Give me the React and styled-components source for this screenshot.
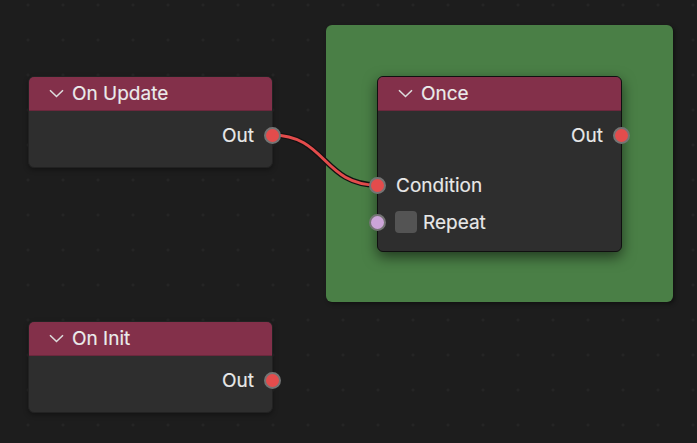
import React from "react";
import styled, { createGlobalStyle } from "styled-components";

const Global = createGlobalStyle`
  html, body { margin: 0; padding: 0; background: #1d1d1d; }
  body { font-family: Inter, "Noto Sans", sans-serif; }
`;

const Canvas = styled.div`
  position: relative;
  width: 697px;
  height: 443px;
  overflow: hidden;
  background-color: #1d1d1d;
  background-image: radial-gradient(circle, #272727 0px, #272727 1px, transparent 1.5px);
  background-size: 35px 35px;
  background-position: 10.5px -12.5px;
`;

const Frame = styled.div`
  position: absolute;
  left: 326px;
  top: 25px;
  width: 347px;
  height: 277px;
  border-radius: 6px;
  background: #4a7f46;
  box-shadow: 1px 1px 0 #141414, 2px 2px 4px rgba(0, 0, 0, 0.4);
`;

const Node = styled.div`
  position: absolute;
  left: ${(p) => p.$x}px;
  top: ${(p) => p.$y}px;
  width: 245px;
  border-radius: 6px;
  background: #2e2e2e;
  box-sizing: border-box;
  border: 1px solid ${(p) => (p.$outlined ? "#101010" : "#222")};
  box-shadow: ${(p) =>
    p.$outlined ? "0 5px 14px rgba(0,0,0,0.55)" : "0 2px 5px rgba(0,0,0,0.35)"};
`;

const Header = styled.div`
  display: flex;
  align-items: center;
  gap: 8px;
  height: 33px;
  padding-left: 20px;
  background: #83304a;
  border-radius: 5px 5px 0 0;
  border-bottom: 1px solid #6c283d;
  color: #ebebeb;
  font-size: 19px;
  -webkit-text-stroke: 0.15px #ebebeb;
`;

const Body = styled.div`
  display: flex;
  flex-direction: column;
  padding: 12px 0 ${(p) => p.$pb}px;
`;

const Row = styled.div`
  position: relative;
  display: flex;
  align-items: center;
  justify-content: ${(p) => (p.$out ? "flex-end" : "flex-start")};
  gap: 6px;
  height: 24px;
  margin-top: ${(p) => p.$mt || 0}px;
  padding: 0 ${(p) => (p.$out ? 18 : 0)}px 0 ${(p) => p.$pl || 18}px;
  color: #e8e8e8;
  font-size: 19px;
  -webkit-text-stroke: 0.15px #e8e8e8;
`;

const Socket = styled.span`
  position: absolute;
  top: 50%;
  ${(p) => (p.$out ? "right: -9px;" : "left: -9px;")}
  width: 17px;
  height: 17px;
  margin-top: -8.5px;
  box-sizing: border-box;
  border-radius: 50%;
  border: 2px solid #747474;
  background: ${(p) => p.$color};
`;

const Check = styled.span`
  width: 22px;
  height: 22px;
  border-radius: 4px;
  background: #545454;
`;

const Chevron = () => (
  <svg width="15" height="9" viewBox="0 0 15 9">
    <path d="M1 1.2 L7.5 7.5 L14 1.2" fill="none" stroke="#dcdcdc" strokeWidth="1.6" />
  </svg>
);

const Wire = styled.svg`
  position: absolute;
  left: 0;
  top: 0;
  pointer-events: none;
`;

const RED = "#e34c4c";

export default function App() {
  return (
    <Canvas>
      <Global />
      <Frame />
      <Wire width="697" height="443">
        <path d="M272 135 C 326 135, 323 185, 377 185" fill="none" stroke="#121212" strokeWidth="5.5" />
        <path d="M272 135 C 326 135, 323 185, 377 185" fill="none" stroke={RED} strokeWidth="3" />
      </Wire>

      <Node $x={28} $y={76}>
        <Header>
          <Chevron />
          On Update
        </Header>
        <Body $pb={20}>
          <Row $out>
            Out
            <Socket $out $color={RED} />
          </Row>
        </Body>
      </Node>

      <Node $x={28} $y={321}>
        <Header>
          <Chevron />
          On Init
        </Header>
        <Body $pb={20}>
          <Row $out>
            Out
            <Socket $out $color={RED} />
          </Row>
        </Body>
      </Node>

      <Node $x={377} $y={76} $outlined>
        <Header>
          <Chevron />
          Once
        </Header>
        <Body $pb={17}>
          <Row $out>
            Out
            <Socket $out $color={RED} />
          </Row>
          <Row $mt={26}>
            <Socket $color={RED} />
            Condition
          </Row>
          <Row $mt={13} $pl={17}>
            <Socket $color="#cca5d8" />
            <Check />
            Repeat
          </Row>
        </Body>
      </Node>
    </Canvas>
  );
}
